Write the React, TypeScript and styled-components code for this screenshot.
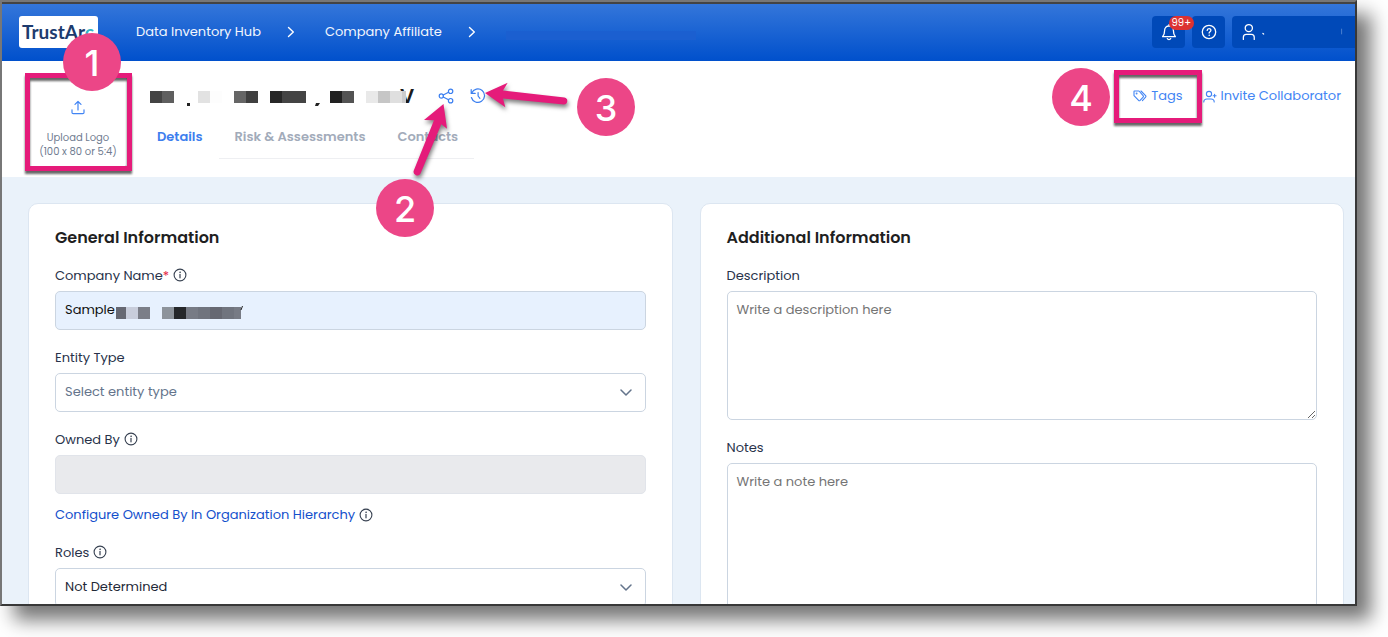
import React from "react";
import styled, { createGlobalStyle, css } from "styled-components";

const GlobalStyle = createGlobalStyle`
  *, *::before, *::after { box-sizing: border-box; }
  body {
    margin: 0;
    background: #fff;
    color: #28324a;
    font: 400 13px/20px Poppins, Inter, "Open Sans", sans-serif;
  }
  button, input, select, textarea { font: inherit; color: inherit; }
  h1, h2 { margin: 0; }
`;

/* ---------- frame ---------- */

const Stage = styled.div`
  height: 100vh;
  padding: 0 31px 31px 0;
  overflow: hidden;
`;

const Frame = styled.div`
  position: relative;
  height: 100%;
  border: 2px solid #383838;
  border-top-color: #777;
  border-left-color: #777;
  box-shadow: 14px 14px 18px rgba(0, 0, 0, 0.54);
`;

const Page = styled.div`
  height: 100%;
  overflow: hidden;
  display: flex;
  flex-direction: column;
  border-top: 2px solid #444;
  background: #eaf2fa;
`;

/* ---------- top bar ---------- */

const TopBar = styled.header`
  flex: none;
  display: flex;
  align-items: flex-start;
  justify-content: space-between;
  height: 57px;
  padding: 12px 0 0 17px;
  background: linear-gradient(#3476da, #0050cc);
  color: #fff;
`;

const Breadcrumb = styled.nav`
  display: flex;
  align-items: center;
`;

const Logo = styled.a`
  width: 79px;
  height: 32px;
  margin-right: 38px;
  padding-left: 3px;
  overflow: hidden;
  border-radius: 3px;
  background: #fff;
  color: #1d3b6e;
  font: 700 19px/32px Lato, sans-serif;
  text-decoration: none;
  span { color: #35b6c6; }
`;

const Crumb = styled.a`
  color: #f2f6fd;
  text-decoration: none;
`;

const CrumbArrow = styled.svg`
  width: 8px;
  height: 12px;
  margin: 0 30px 0 26px;
`;

const HiddenCrumb = styled.span`
  width: 190px;
  height: 9px;
  margin-top: 7px;
  background: #1b5fd0;
`;

const BarActions = styled.div`
  display: flex;
  gap: 7px;
`;

const BarButton = styled.button<{ $wide?: boolean }>`
  position: relative;
  display: flex;
  align-items: center;
  justify-content: ${(p) => (p.$wide ? "flex-start" : "center")};
  width: ${(p) => (p.$wide ? 123 : 33)}px;
  height: 32px;
  padding: 0 ${(p) => (p.$wide ? 10 : 0)}px;
  border: 0;
  border-radius: ${(p) => (p.$wide ? "4px 0 0 4px" : "4px")};
  background: #0049b8;
  color: #fff;
`;

const Badge = styled.span`
  position: absolute;
  top: 0;
  right: -9px;
  z-index: 1;
  padding: 0 3px;
  border-radius: 7px;
  background: #dc3232;
  font-size: 10px;
  line-height: 14px;
`;

/* ---------- entity header ---------- */

const EntityHeader = styled.section`
  flex: none;
  display: flex;
  height: 116px;
  padding: 15px 14px 0 25px;
  background: #fff;
`;

const Upload = styled.button`
  display: flex;
  flex-direction: column;
  align-items: center;
  width: 101px;
  height: 91px;
  padding: 23px 0 0 1px;
  border: 1px dashed #8a93a3;
  border-radius: 4px;
  background: #fff;
  color: #6f7b90;
  font-size: 10px;
  line-height: 14px;
  svg { margin-bottom: 16px; }
`;

const EntityMain = styled.div`
  flex: 1;
  padding: 10px 0 0 13px;
`;

const TitleRow = styled.div`
  display: flex;
  align-items: center;
  height: 20px;
  padding-left: 9px;
`;

const Title = styled.h1`
  position: relative;
  margin-right: 24px;
  padding-left: 250px;
  color: #1b1b1b;
  font-size: 20px;
  font-weight: 600;
  line-height: 20px;
`;

const TitleMask = styled.svg`
  position: absolute;
  top: 4px;
  left: 0;
`;

const IconButton = styled.button`
  display: flex;
  margin-right: 16px;
  padding: 0;
  border: 0;
  background: none;
  color: #3b7ff0;
`;

const Tabs = styled.nav`
  display: flex;
  margin-top: 11px;
`;

const Tab = styled.a<{ $active?: boolean }>`
  padding: 10px 16px 11px;
  border-bottom: 1px solid ${(p) => (p.$active ? "transparent" : "#eeeff2")};
  color: ${(p) => (p.$active ? "#3d7eee" : "#a2abba")};
  font-weight: 600;
  text-decoration: none;
`;

const EntityActions = styled.div`
  display: flex;
  gap: 20px;
  height: 20px;
  margin-top: 10px;
`;

const TextButton = styled.button`
  display: flex;
  align-items: center;
  gap: 4px;
  padding: 0;
  border: 0;
  background: none;
  color: #4285f4;
`;

/* ---------- form cards ---------- */

const Columns = styled.main`
  flex: none;
  display: grid;
  grid-template-columns: 1fr 1fr;
  gap: 27px;
  padding: 26px 11px 26px 26px;
`;

const Card = styled.section`
  display: flex;
  flex-direction: column;
  gap: 16px;
  padding: 22px 26px;
  border: 1px solid #dce6f1;
  border-radius: 10px;
  background: #fff;
`;

const CardTitle = styled.h2`
  color: #1f1f1f;
  font-size: 16px;
  font-weight: 600;
  line-height: 24px;
`;

const Fields = styled.div`
  display: flex;
  flex-direction: column;
  gap: 18px;
`;

const Field = styled.div`
  display: flex;
  flex-direction: column;
  gap: 5px;
`;

const LabelRow = styled.div`
  display: flex;
  align-items: center;
  gap: 4px;
  height: 20px;
  svg { margin-bottom: 2px; }
`;

const Required = styled.span`
  color: #e5243f;
`;

const control = css`
  width: 100%;
  border: 1px solid #cbd5e1;
  border-radius: 5px;
  background: #fff;
  outline: 0;
`;

const InputWrap = styled.div`
  position: relative;
  display: flex;
`;

const Input = styled.input`
  ${control}
  height: 39px;
  padding: 0 9px 2px;
  background: #e7f1fe;
  color: #111;
  &:disabled { background: #e9eaed; border-color: #e1e4ea; }
`;

const InputMask = styled.svg`
  position: absolute;
  top: 14px;
  left: 61px;
`;

const SelectWrap = styled.div`
  display: grid;
  align-items: center;
  > * { grid-area: 1 / 1; }
  svg { justify-self: end; margin-right: 14px; pointer-events: none; }
`;

const Select = styled.select<{ $empty?: boolean }>`
  ${control}
  appearance: none;
  height: 39px;
  padding: 0 9px 2px;
  color: ${(p) => (p.$empty ? "#64748b" : "#1f2937")};
`;

const TextArea = styled.textarea<{ $tall?: boolean }>`
  ${control}
  display: block;
  height: ${(p) => (p.$tall ? 200 : 129)}px;
  padding: 8px 9px;
  resize: vertical;
  &::placeholder { color: #757575; }
`;

const LinkRow = styled.div`
  display: flex;
  align-items: center;
  gap: 4px;
  height: 20px;
  margin-top: 6px;
`;

const Link = styled.a`
  color: #1450cc;
  text-decoration: none;
`;

/* ---------- callouts ---------- */

const Marker = styled.span`
  position: absolute;
  z-index: 4;
  width: 58px;
  height: 58px;
  border-radius: 50%;
  background: #ec4687;
  color: #fff;
  font: 500 36px/60px Inter, "Liberation Sans", Arial, sans-serif;
  text-align: center;
`;

const Highlight = styled.div`
  position: absolute;
  z-index: 3;
  border: 5px solid #e51b7a;
  filter: drop-shadow(0 3px 1px rgba(0, 0, 0, 0.6));
  pointer-events: none;
`;

const Arrow = styled.svg`
  position: absolute;
  z-index: 3;
  overflow: visible;
  filter: drop-shadow(1px 3px 2px rgba(0, 0, 0, 0.5));
  pointer-events: none;
`;

const MarkerOne = styled(Marker)`top: 31px; left: 61px;`;
const MarkerTwo = styled(Marker)`top: 177px; left: 374px;`;
const MarkerThree = styled(Marker)`top: 76px; left: 575px;`;
const MarkerFour = styled(Marker)`top: 66px; right: 245px;`;
const UploadHighlight = styled(Highlight)`top: 71px; left: 23px; width: 107px; height: 98px;`;
const TagsHighlight = styled(Highlight)`top: 68px; right: 153px; width: 88px; height: 53px;`;
const ShareArrow = styled(Arrow)`top: 102px; left: 411px;`;
const HistoryArrow = styled(Arrow)`top: 80px; left: 483px;`;

/* ---------- icons ---------- */

const stroke = {
  fill: "none",
  stroke: "currentColor",
  strokeLinecap: "round" as const,
  strokeLinejoin: "round" as const,
};

const ChevronRight = () => (
  <CrumbArrow viewBox="0 0 8 12" {...stroke} strokeWidth="1.4" aria-hidden>
    <path d="M1.5 1.5 6.3 6l-4.8 4.5" />
  </CrumbArrow>
);

const ChevronDown = () => (
  <svg width="12" height="8" viewBox="0 0 12 8" {...stroke} stroke="#64748b" strokeWidth="1.5" aria-hidden>
    <path d="M1 1l5 5 5-5" />
  </svg>
);

const InfoIcon = () => (
  <svg width="14" height="14" viewBox="0 0 14 14" {...stroke} stroke="#374151" aria-hidden>
    <circle cx="7" cy="7" r="5.9" strokeWidth="1.1" />
    <path d="M7 6.4v3.4" strokeWidth="1.2" />
    <circle cx="7" cy="4.2" r=".4" strokeWidth=".6" fill="#374151" />
  </svg>
);

const BellIcon = () => (
  <svg width="16" height="18" viewBox="0 0 16 18" {...stroke} strokeWidth="1.3" aria-hidden>
    <path d="M8 1.6v1.2M3.6 7.4a4.4 4.4 0 0 1 8.8 0c0 3.4.7 4.9 2 6.3H1.6c1.3-1.4 2-2.9 2-6.3zM6.3 15.6c.6 1.3 2.8 1.3 3.4 0" />
  </svg>
);

const HelpIcon = () => (
  <svg width="16" height="16" viewBox="0 0 16 16" {...stroke} strokeWidth="1.3" aria-hidden>
    <circle cx="8" cy="8" r="6.7" />
    <path d="M6.2 6.4c0-2.4 3.7-2.4 3.7-.1 0 1.4-1.8 1.4-1.8 2.8" />
    <circle cx="8.1" cy="11.2" r=".4" fill="currentColor" strokeWidth=".6" />
  </svg>
);

const UserIcon = () => (
  <svg width="106" height="18" viewBox="0 0 106 18" {...stroke} strokeWidth="1.3" aria-hidden>
    <circle cx="7" cy="5" r="3.7" />
    <path d="M1.4 16.6v-2.2c0-1.9 1.2-3 3-3h5.2c1.8 0 3 1.1 3 3v2.2" />
    <path d="M21.5 10.5l.8.6" strokeWidth="1.2" />
    <path d="M102.5 6v5" stroke="#4b80cf" strokeWidth="1" />
  </svg>
);

const UploadIcon = () => (
  <svg width="14" height="15" viewBox="0 0 14 15" {...stroke} stroke="#4285f4" strokeWidth="1.2" aria-hidden>
    <path d="M7 10V1.6M4 4.4l3-2.9 3 2.9M1 9.8v2.6c0 .8.4 1.2 1.2 1.2h9.6c.8 0 1.2-.4 1.2-1.2V9.8" />
  </svg>
);

const ShareIcon = () => (
  <svg width="16" height="16" viewBox="0 0 16 16" {...stroke} strokeWidth="1.2" aria-hidden>
    <circle cx="3.3" cy="8" r="2.1" />
    <circle cx="12.6" cy="3.3" r="2.2" />
    <circle cx="12.6" cy="12.7" r="2.2" />
    <path d="M5.2 7l5.4-2.7M5.2 9l5.4 2.7" />
  </svg>
);

const HistoryIcon = () => (
  <svg width="16" height="16" viewBox="0 0 16 16" {...stroke} strokeWidth="1.2" aria-hidden>
    <path d="M1.7 5A6.7 6.7 0 1 1 1.4 9.5M1.2 1.6v3.8h4M8.1 4.6V8l1.8 2.3" />
  </svg>
);

const TagsIcon = () => (
  <svg width="14" height="12" viewBox="0 0 14 12" {...stroke} strokeWidth="1.1" aria-hidden>
    <path d="M1 1.4v4.2l4.6 4.8c.5.5 1 .5 1.500 0l3-3.200c.5-.5.5-1 0-1.500L6 1H1.400C1.100 1 1 1.100 1 1.400zM8 1l4.600 4.600c.5.5.5 1 0 1.500L9.400 10.600" />
    <circle cx="3.6" cy="3.5" r=".4" />
  </svg>
);

const InviteIcon = () => (
  <svg width="14" height="13" viewBox="0 0 14 13" {...stroke} strokeWidth="1.1" aria-hidden>
    <circle cx="6" cy="4" r="2.6" />
    <path d="M.8 12c0-2 1.4-3 3.200-3h4c1.800 0 3.200 1 3.200 3M11.600 4.200v3M10.100 5.700h3" />
  </svg>
);

type Block = [x: number, width: number, fill: string];

const titleBlocks: Block[] = [
  [0, 12, "#444"], [12, 12, "#5f5f5f"], [48, 12, "#e2e2e2"], [60, 12, "#fdfdfd"],
  [84, 12, "#666"], [96, 12, "#404040"], [120, 12, "#272727"], [132, 24, "#444"],
  [180, 12, "#212121"], [192, 12, "#535353"], [216, 12, "#e9e9e9"],
  [228, 12, "#c6c6c6"], [240, 12, "#dfdfdf"], [252, 4, "#ccc"],
];

const nameBlocks: Block[] = [
  [0, 10, "#666872"], [10, 12, "#c8cddb"], [22, 12, "#7b7e88"], [46, 12, "#8d939b"],
  [58, 12, "#25272a"], [70, 12, "#777b85"], [82, 12, "#70747e"], [94, 12, "#666872"],
  [106, 12, "#70747e"], [118, 7, "#777b85"],
];

const Blocks = ({ items }: { items: Block[] }) => (
  <>
    {items.map(([x, w, fill]) => (
      <rect key={x} x={x} y="1" width={w} height="12" fill={fill} />
    ))}
  </>
);

export default function App() {
  return (
    <Stage>
      <GlobalStyle />
      <Frame>
        <Page>
          <TopBar>
            <Breadcrumb aria-label="Breadcrumb">
              <Logo href="#">TrustAr<span>c</span></Logo>
              <Crumb href="#">Data Inventory Hub</Crumb>
              <ChevronRight />
              <Crumb href="#">Company Affiliate</Crumb>
              <ChevronRight />
              <HiddenCrumb />
            </Breadcrumb>
            <BarActions>
              <BarButton aria-label="Notifications"><BellIcon /><Badge>99+</Badge></BarButton>
              <BarButton aria-label="Help"><HelpIcon /></BarButton>
              <BarButton $wide aria-label="Account"><UserIcon /></BarButton>
            </BarActions>
          </TopBar>

          <EntityHeader>
            <Upload>
              <UploadIcon />
              <span>Upload Logo</span>
              <span>(100 x 80 or 5:4)</span>
            </Upload>
            <EntityMain>
              <TitleRow>
                <Title>
                  V
                  <TitleMask width="256" height="20" aria-hidden>
                    <Blocks items={titleBlocks} />
                    <path d="M37 13h3v3h-3zM166 13h4l-2 3h-3z" fill="#222" />
                  </TitleMask>
                </Title>
                <IconButton aria-label="Share"><ShareIcon /></IconButton>
                <IconButton aria-label="History"><HistoryIcon /></IconButton>
              </TitleRow>
              <Tabs>
                <Tab href="#" $active>Details</Tab>
                <Tab href="#">Risk &amp; Assessments</Tab>
                <Tab href="#">Contacts</Tab>
              </Tabs>
            </EntityMain>
            <EntityActions>
              <TextButton><TagsIcon />Tags</TextButton>
              <TextButton><InviteIcon />Invite Collaborator</TextButton>
            </EntityActions>
          </EntityHeader>

          <Columns>
            <Card>
              <CardTitle>General Information</CardTitle>
              <Fields>
                <Field>
                  <LabelRow>
                    <label htmlFor="name">Company Name<Required>*</Required></label>
                    <InfoIcon />
                  </LabelRow>
                  <InputWrap>
                    <Input id="name" defaultValue="Sample" />
                    <InputMask width="130" height="16" aria-hidden>
                      <g transform="translate(0 1)"><Blocks items={nameBlocks} /></g>
                      <path d="M126.5 1l-1.5 4" stroke="#222" />
                    </InputMask>
                  </InputWrap>
                </Field>
                <Field>
                  <LabelRow><label htmlFor="type">Entity Type</label></LabelRow>
                  <SelectWrap>
                    <Select id="type" $empty><option>Select entity type</option></Select>
                    <ChevronDown />
                  </SelectWrap>
                </Field>
                <Field>
                  <LabelRow><label htmlFor="owner">Owned By</label><InfoIcon /></LabelRow>
                  <Input id="owner" disabled />
                  <LinkRow>
                    <Link href="#">Configure Owned By In Organization Hierarchy</Link>
                    <InfoIcon />
                  </LinkRow>
                </Field>
                <Field>
                  <LabelRow><label htmlFor="roles">Roles</label><InfoIcon /></LabelRow>
                  <SelectWrap>
                    <Select id="roles"><option>Not Determined</option></Select>
                    <ChevronDown />
                  </SelectWrap>
                </Field>
              </Fields>
            </Card>

            <Card>
              <CardTitle>Additional Information</CardTitle>
              <Fields>
                <Field>
                  <LabelRow><label htmlFor="description">Description</label></LabelRow>
                  <TextArea id="description" placeholder="Write a description here" />
                </Field>
                <Field>
                  <LabelRow><label htmlFor="notes">Notes</label></LabelRow>
                  <TextArea id="notes" $tall placeholder="Write a note here" />
                </Field>
              </Fields>
            </Card>
          </Columns>
        </Page>

        <UploadHighlight />
        <TagsHighlight />
        <ShareArrow width="40" height="74" aria-hidden>
          <path d="M30.5 0L34 24.7 28.3 20.3 7.5 69.5a3.7 3.7 0 0 1-6.800-2.800L21 16.200 11 16z" fill="#e51b7a" />
        </ShareArrow>
        <HistoryArrow width="84" height="28" aria-hidden>
          <path d="M0 11L22.7 .7 18 8.500 79.500 15.500a3.600 3.600 0 0 1-.6 7.100L18 16.500 20.300 25.300z" fill="#e51b7a" />
        </HistoryArrow>
        <MarkerOne>1</MarkerOne>
        <MarkerTwo>2</MarkerTwo>
        <MarkerThree>3</MarkerThree>
        <MarkerFour>4</MarkerFour>
      </Frame>
    </Stage>
  );
}
